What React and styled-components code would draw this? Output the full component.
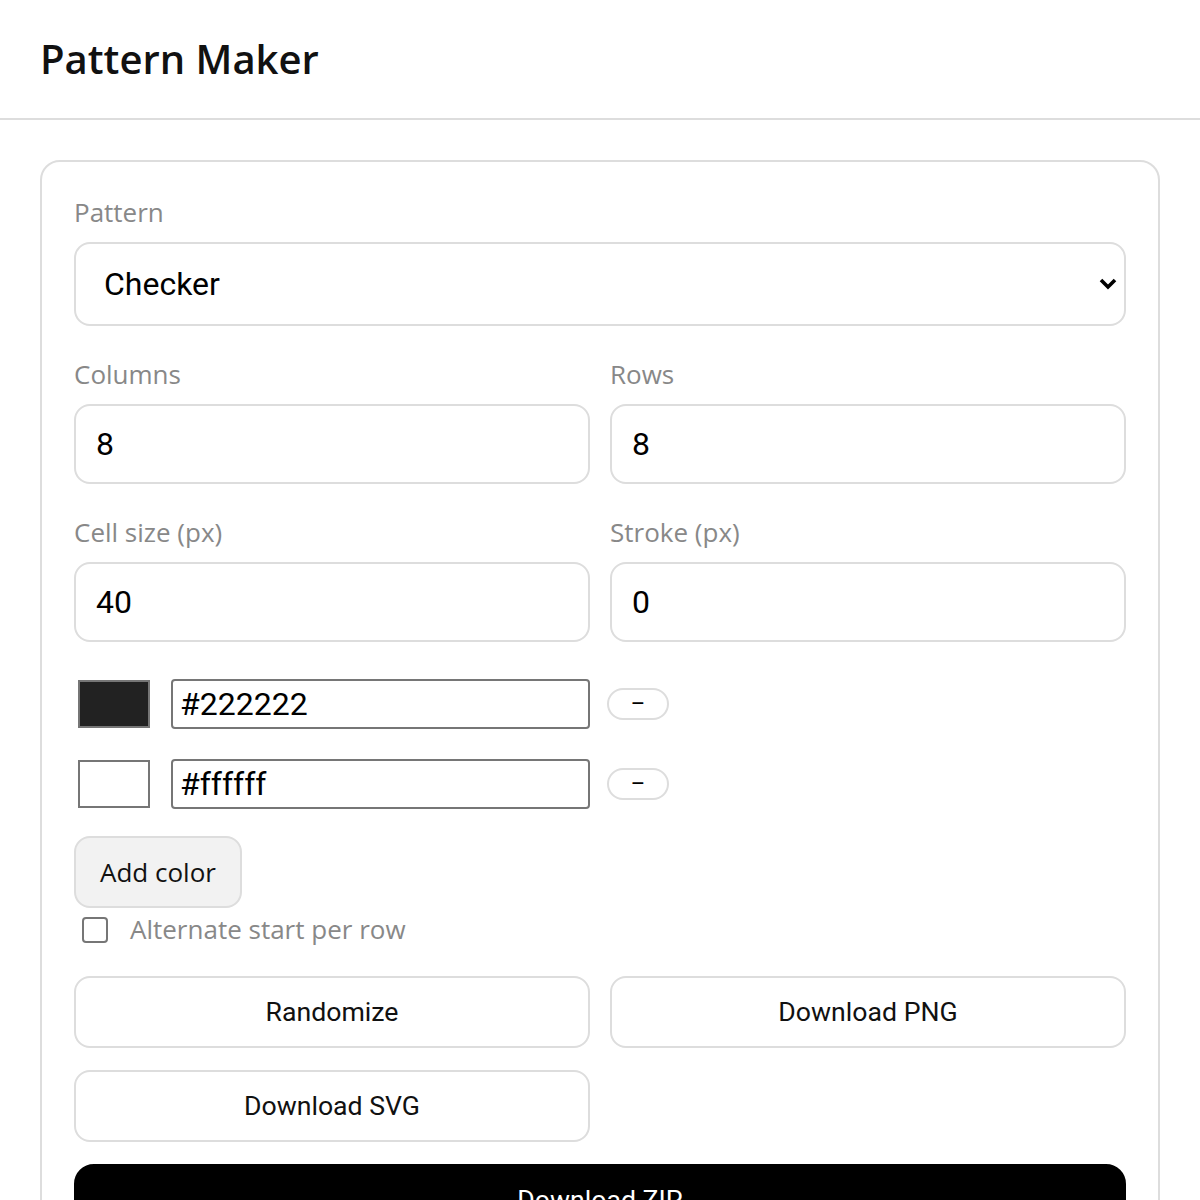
import { useState } from 'react';
import styled, { createGlobalStyle } from 'styled-components';

const GlobalStyle = createGlobalStyle`
    * {
        box-sizing: border-box;
    }
    body {
        margin: 0;
        background: #fff;
        font-family: 'Open Sans', 'Noto Sans', sans-serif;
        color: #111;
    }
`;

const Header = styled.header`
    padding: 32px 40px;
    border-bottom: 2px solid #ddd;
`;

const Title = styled.h1`
    margin: 0;
    font-size: 40px;
    font-weight: 600;
    line-height: 54px;
    color: #111;
`;

const Main = styled.main`
    padding: 40px;
`;

const Card = styled.section`
    border: 2px solid #ddd;
    border-radius: 20px;
    padding: 32px;
    display: flex;
    flex-direction: column;
`;

const Field = styled.label`
    display: flex;
    flex-direction: column;
    gap: 13px;
    margin-bottom: ${(p) => p.$mb || 0}px;
`;

const LabelText = styled.span`
    padding-top: 2px;
    font-size: 26px;
    line-height: 33px;
    color: #888;
`;

const SelectWrap = styled.div`
    position: relative;
`;

const Select = styled.select`
    appearance: none;
    width: 100%;
    height: 84px;
    padding: 0 48px 0 28px;
    border: 2px solid #ddd;
    border-radius: 16px;
    background: #fff;
    font-family: Roboto, sans-serif;
    font-size: 32px;
    color: #000;
`;

const Chevron = styled.svg`
    position: absolute;
    right: 9px;
    top: 36px;
    pointer-events: none;
`;

const Grid = styled.div`
    display: grid;
    grid-template-columns: 1fr 1fr;
    gap: 30px 20px;
`;

const NumberInput = styled.input`
    width: 100%;
    height: 80px;
    padding: 0 20px;
    border: 2px solid #ddd;
    border-radius: 16px;
    font-family: Roboto, sans-serif;
    font-size: 32px;
    color: #000;
    background: #fff;
`;

const ColorList = styled.div`
    display: flex;
    flex-direction: column;
    gap: 30px;
    margin-top: 37px;
`;

const ColorRow = styled.div`
    display: flex;
    align-items: center;
    height: 50px;
    padding-left: 4px;
`;

const Swatch = styled.span`
    width: 72px;
    height: 48px;
    border: 2px solid #767676;
    background: ${(p) => p.$color};
`;

const HexInput = styled.input`
    width: 419px;
    height: 50px;
    margin-left: 21px;
    padding: 0 7px;
    border: 2px solid #767676;
    border-radius: 4px;
    font-family: Roboto, sans-serif;
    font-size: 32px;
    color: #000;
`;

const RemoveButton = styled.button`
    width: 62px;
    height: 32px;
    margin-left: 17px;
    padding: 0;
    border: 2px solid #ddd;
    border-radius: 16px;
    background: #fff;
    font-family: Roboto, sans-serif;
    font-size: 22px;
    line-height: 1;
    color: #000;
`;

const AddButton = styled.button`
    align-self: flex-start;
    height: 72px;
    margin-top: 27px;
    padding: 0 24px;
    border: 2px solid #ddd;
    border-radius: 16px;
    background: #f2f2f2;
    font-family: 'Open Sans', sans-serif;
    font-size: 26px;
    color: #111;
`;

const CheckRow = styled.label`
    display: flex;
    align-items: center;
    gap: 22px;
    margin-top: 4px;
    padding-left: 8px;
    font-size: 26px;
    line-height: 35px;
    color: #888;
`;

const CheckBox = styled.span`
    width: 26px;
    height: 26px;
    border: 2px solid #767676;
    border-radius: 4px;
    background: #fff;
`;

const Actions = styled.div`
    display: grid;
    grid-template-columns: 1fr 1fr;
    gap: 22px 20px;
    margin-top: 29px;
`;

const ActionButton = styled.button`
    height: 72px;
    border: 2px solid ${(p) => (p.$primary ? '#000' : '#ddd')};
    border-radius: ${(p) => (p.$primary ? 20 : 16)}px;
    background: ${(p) => (p.$primary ? '#000' : '#fff')};
    color: ${(p) => (p.$primary ? '#fff' : '#111')};
    font-family: Roboto, sans-serif;
    font-size: 26.67px;
    grid-column: ${(p) => (p.$wide ? '1 / -1' : 'auto')};
`;

const App = () => {
    const [colors] = useState(['#222222', '#ffffff']);

    return (
        <>
            <GlobalStyle />
            <Header>
                <Title>Pattern Maker</Title>
            </Header>
            <Main>
                <Card>
                    <Field $mb={30}>
                        <LabelText>Pattern</LabelText>
                        <SelectWrap>
                            <Select defaultValue="checker">
                                <option value="checker">Checker</option>
                                <option value="stripes">Stripes</option>
                                <option value="dots">Dots</option>
                            </Select>
                            <Chevron width="18" height="12" viewBox="0 0 18 12">
                                <polyline
                                    points="2,2 9,9 16,2"
                                    fill="none"
                                    stroke="#000"
                                    strokeWidth="3.6"
                                />
                            </Chevron>
                        </SelectWrap>
                    </Field>

                    <Grid>
                        <Field>
                            <LabelText>Columns</LabelText>
                            <NumberInput type="number" defaultValue={8} />
                        </Field>
                        <Field>
                            <LabelText>Rows</LabelText>
                            <NumberInput type="number" defaultValue={8} />
                        </Field>
                        <Field>
                            <LabelText>Cell size (px)</LabelText>
                            <NumberInput type="number" defaultValue={40} />
                        </Field>
                        <Field>
                            <LabelText>Stroke (px)</LabelText>
                            <NumberInput type="number" defaultValue={0} />
                        </Field>
                    </Grid>

                    <ColorList>
                        {colors.map((c) => (
                            <ColorRow key={c}>
                                <Swatch $color={c} />
                                <HexInput type="text" defaultValue={c} />
                                <RemoveButton>–</RemoveButton>
                            </ColorRow>
                        ))}
                    </ColorList>

                    <AddButton>Add color</AddButton>

                    <CheckRow>
                        <CheckBox />
                        Alternate start per row
                    </CheckRow>

                    <Actions>
                        <ActionButton>Randomize</ActionButton>
                        <ActionButton>Download PNG</ActionButton>
                        <ActionButton>Download SVG</ActionButton>
                        <span />
                        <ActionButton $primary $wide>
                            Download ZIP
                        </ActionButton>
                    </Actions>
                </Card>
            </Main>
        </>
    );
};

export default App;
